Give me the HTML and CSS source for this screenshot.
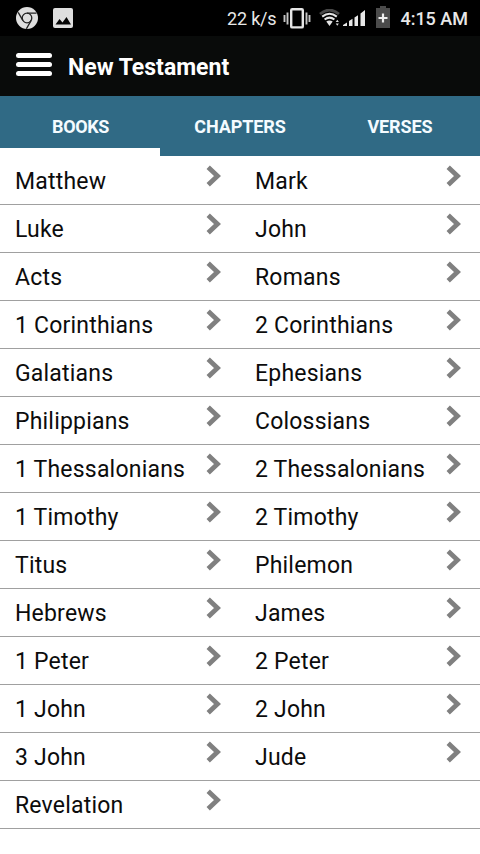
FILE: index.html
```html
<!DOCTYPE html>
<html lang="en">
<head>
<meta charset="utf-8">
<title>New Testament</title>
<link rel="stylesheet" href="styles.css">
</head>
<body>
<svg class="defs" width="0" height="0"><symbol id="chevron" viewBox="0 0 17 24"><path d="M3.2 3.2 12.5 12 3.2 20.8" fill="none" stroke="#808080" stroke-width="4.8"/></symbol></svg>
<div class="status">
  <svg class="chrome" width="22" height="22" viewBox="0 0 22 22"><circle cx="11" cy="11" r="11" fill="#dedede"/><g fill="none" stroke="#222" stroke-width="1.3"><circle cx="11" cy="11" r="4.8"/><path d="M11 6.2H20.500M6.800 13.400 2.200 5.400M15.200 13.400 10.400 21.800"/></g></svg>
  <svg class="photo" width="20" height="20" viewBox="0 0 20 20"><rect width="20" height="20" rx="2" fill="#dedede"/><path d="M2.500 16.500 6.500 11l3 3.500 4-5.500 4.500 7.500z" fill="#050505"/></svg>
  <span class="speed">22 k/s</span>
  <svg class="vibrate" width="28" height="22" viewBox="0 0 28 22"><rect x="8.200" y="2.200" width="11.600" height="18.200" rx="1" fill="none" stroke="#e6e6e6" stroke-width="2.400"/><path d="M1.500 8v7M4.500 5.500v12M23.500 5.500v12M26.500 8v7" stroke="#c4c4c4" stroke-width="1.900"/></svg>
  <svg class="wifi" width="24" height="18" viewBox="0 0 24 18"><g fill="none" stroke="#e4e4e4" stroke-width="2"><path d="M1 5Q10.500 -2.800 20 5" stroke="#484848" stroke-width="2.800"/><path d="M3.200 7.600Q10.500 1.800 17.800 7.600M5.600 10.600Q10.500 6.600 15.400 10.600"/></g><path d="M7.300 12.600Q10.500 10.200 13.700 12.600L10.500 17z" fill="#e4e4e4"/><path d="m16.700 13 1.600-2.300 1.600 2.300zM16.700 14.400l1.600 2.300 1.600-2.300z" fill="#ddd"/></svg>
  <svg class="signal" width="23" height="18" viewBox="0 0 23 18"><path d="M0 17v-1l4-2.500V17zM6 17v-5l3.500-2.200V17zM11.500 17V8.500L15 6.200V17zM17.500 17V4.500L22 1v16z" fill="#e8e8e8"/></svg>
  <svg class="battery" width="14" height="22" viewBox="0 0 14 22"><path d="M0 2h4V0h6v2h4v20H0z" fill="#4b4b4b"/><path d="M7 7.500v9M2.500 12h9" stroke="#eee" stroke-width="2.200"/></svg>
  <span class="time">4:15 AM</span>
</div>
<header class="appbar">
  <div class="menu"><i></i><i></i><i></i></div>
  <h1>New Testament</h1>
</header>
<nav class="tabs">
  <div class="tab active">BOOKS</div><div class="tab">CHAPTERS</div><div class="tab">VERSES</div>
</nav>
<main class="books">
  <div class="book"><span>Matthew</span><svg><use href="#chevron"/></svg></div>
  <div class="book"><span>Mark</span><svg><use href="#chevron"/></svg></div>
  <div class="book"><span>Luke</span><svg><use href="#chevron"/></svg></div>
  <div class="book"><span>John</span><svg><use href="#chevron"/></svg></div>
  <div class="book"><span>Acts</span><svg><use href="#chevron"/></svg></div>
  <div class="book"><span>Romans</span><svg><use href="#chevron"/></svg></div>
  <div class="book"><span>1 Corinthians</span><svg><use href="#chevron"/></svg></div>
  <div class="book"><span>2 Corinthians</span><svg><use href="#chevron"/></svg></div>
  <div class="book"><span>Galatians</span><svg><use href="#chevron"/></svg></div>
  <div class="book"><span>Ephesians</span><svg><use href="#chevron"/></svg></div>
  <div class="book"><span>Philippians</span><svg><use href="#chevron"/></svg></div>
  <div class="book"><span>Colossians</span><svg><use href="#chevron"/></svg></div>
  <div class="book"><span>1 Thessalonians</span><svg><use href="#chevron"/></svg></div>
  <div class="book"><span>2 Thessalonians</span><svg><use href="#chevron"/></svg></div>
  <div class="book"><span>1 Timothy</span><svg><use href="#chevron"/></svg></div>
  <div class="book"><span>2 Timothy</span><svg><use href="#chevron"/></svg></div>
  <div class="book"><span>Titus</span><svg><use href="#chevron"/></svg></div>
  <div class="book"><span>Philemon</span><svg><use href="#chevron"/></svg></div>
  <div class="book"><span>Hebrews</span><svg><use href="#chevron"/></svg></div>
  <div class="book"><span>James</span><svg><use href="#chevron"/></svg></div>
  <div class="book"><span>1 Peter</span><svg><use href="#chevron"/></svg></div>
  <div class="book"><span>2 Peter</span><svg><use href="#chevron"/></svg></div>
  <div class="book"><span>1 John</span><svg><use href="#chevron"/></svg></div>
  <div class="book"><span>2 John</span><svg><use href="#chevron"/></svg></div>
  <div class="book"><span>3 John</span><svg><use href="#chevron"/></svg></div>
  <div class="book"><span>Jude</span><svg><use href="#chevron"/></svg></div>
  <div class="book"><span>Revelation</span><svg><use href="#chevron"/></svg></div>
  <div class="book"></div>
</main>
</body>
</html>
```
FILE: styles.css
```css
* { box-sizing: border-box; }
body { margin: 0; background: #fff; color: #0c0c0c; font-family: Roboto, sans-serif; }
svg { display: block; flex: none; }
.defs { position: absolute; }
.status { height: 36px; background: #000; color: #e8e8e8; display: flex; align-items: center; padding: 0 12px 0 16px; font-size: 18px; line-height: 36px; white-space: nowrap; }
.photo { margin-left: 15px; }
.chrome, .photo { margin-bottom: 1px; }
.speed { margin-left: auto; padding-top: 1px; letter-spacing: -.2px; }
.vibrate { margin-left: 7px; }
.wifi { margin-left: 8px; }
.signal { margin-left: 0; }
.battery { margin-left: 10px; margin-bottom: 2px; }
.time { margin-left: 10px; padding-top: 1px; font-weight: 500; }
.appbar { height: 60px; background: #090b0a; display: flex; padding-left: 16px; }
.menu { width: 36px; padding-top: 17px; display: flex; flex-direction: column; gap: 4px; }
.menu i { height: 5px; border-radius: 3px; background: #fff; }
h1 { margin: 0 0 0 16px; font-size: 23px; line-height: 63px; font-weight: 700; color: #fff; }
.tabs { height: 60px; background: #306a85; display: grid; grid-template-columns: repeat(3, 1fr); }
.tab { color: #f4fbff; font-size: 18px; line-height: 62px; height: 60px; font-weight: 700; text-align: center; letter-spacing: -.1px; }
.tab.active { border-bottom: 8px solid #fff; letter-spacing: -.4px; padding-left: 1px; }
.books { padding-top: 1px; display: grid; grid-template-columns: 1fr 1fr; grid-auto-rows: 48px; }
.book { border-bottom: 1px solid #a0a0a0; display: flex; justify-content: space-between; padding: 0 18px 0 15px; font-size: 23px; line-height: 49px; white-space: nowrap; letter-spacing: .2px; }
.book svg { width: 17px; height: 24px; margin-top: 7px; }
```
